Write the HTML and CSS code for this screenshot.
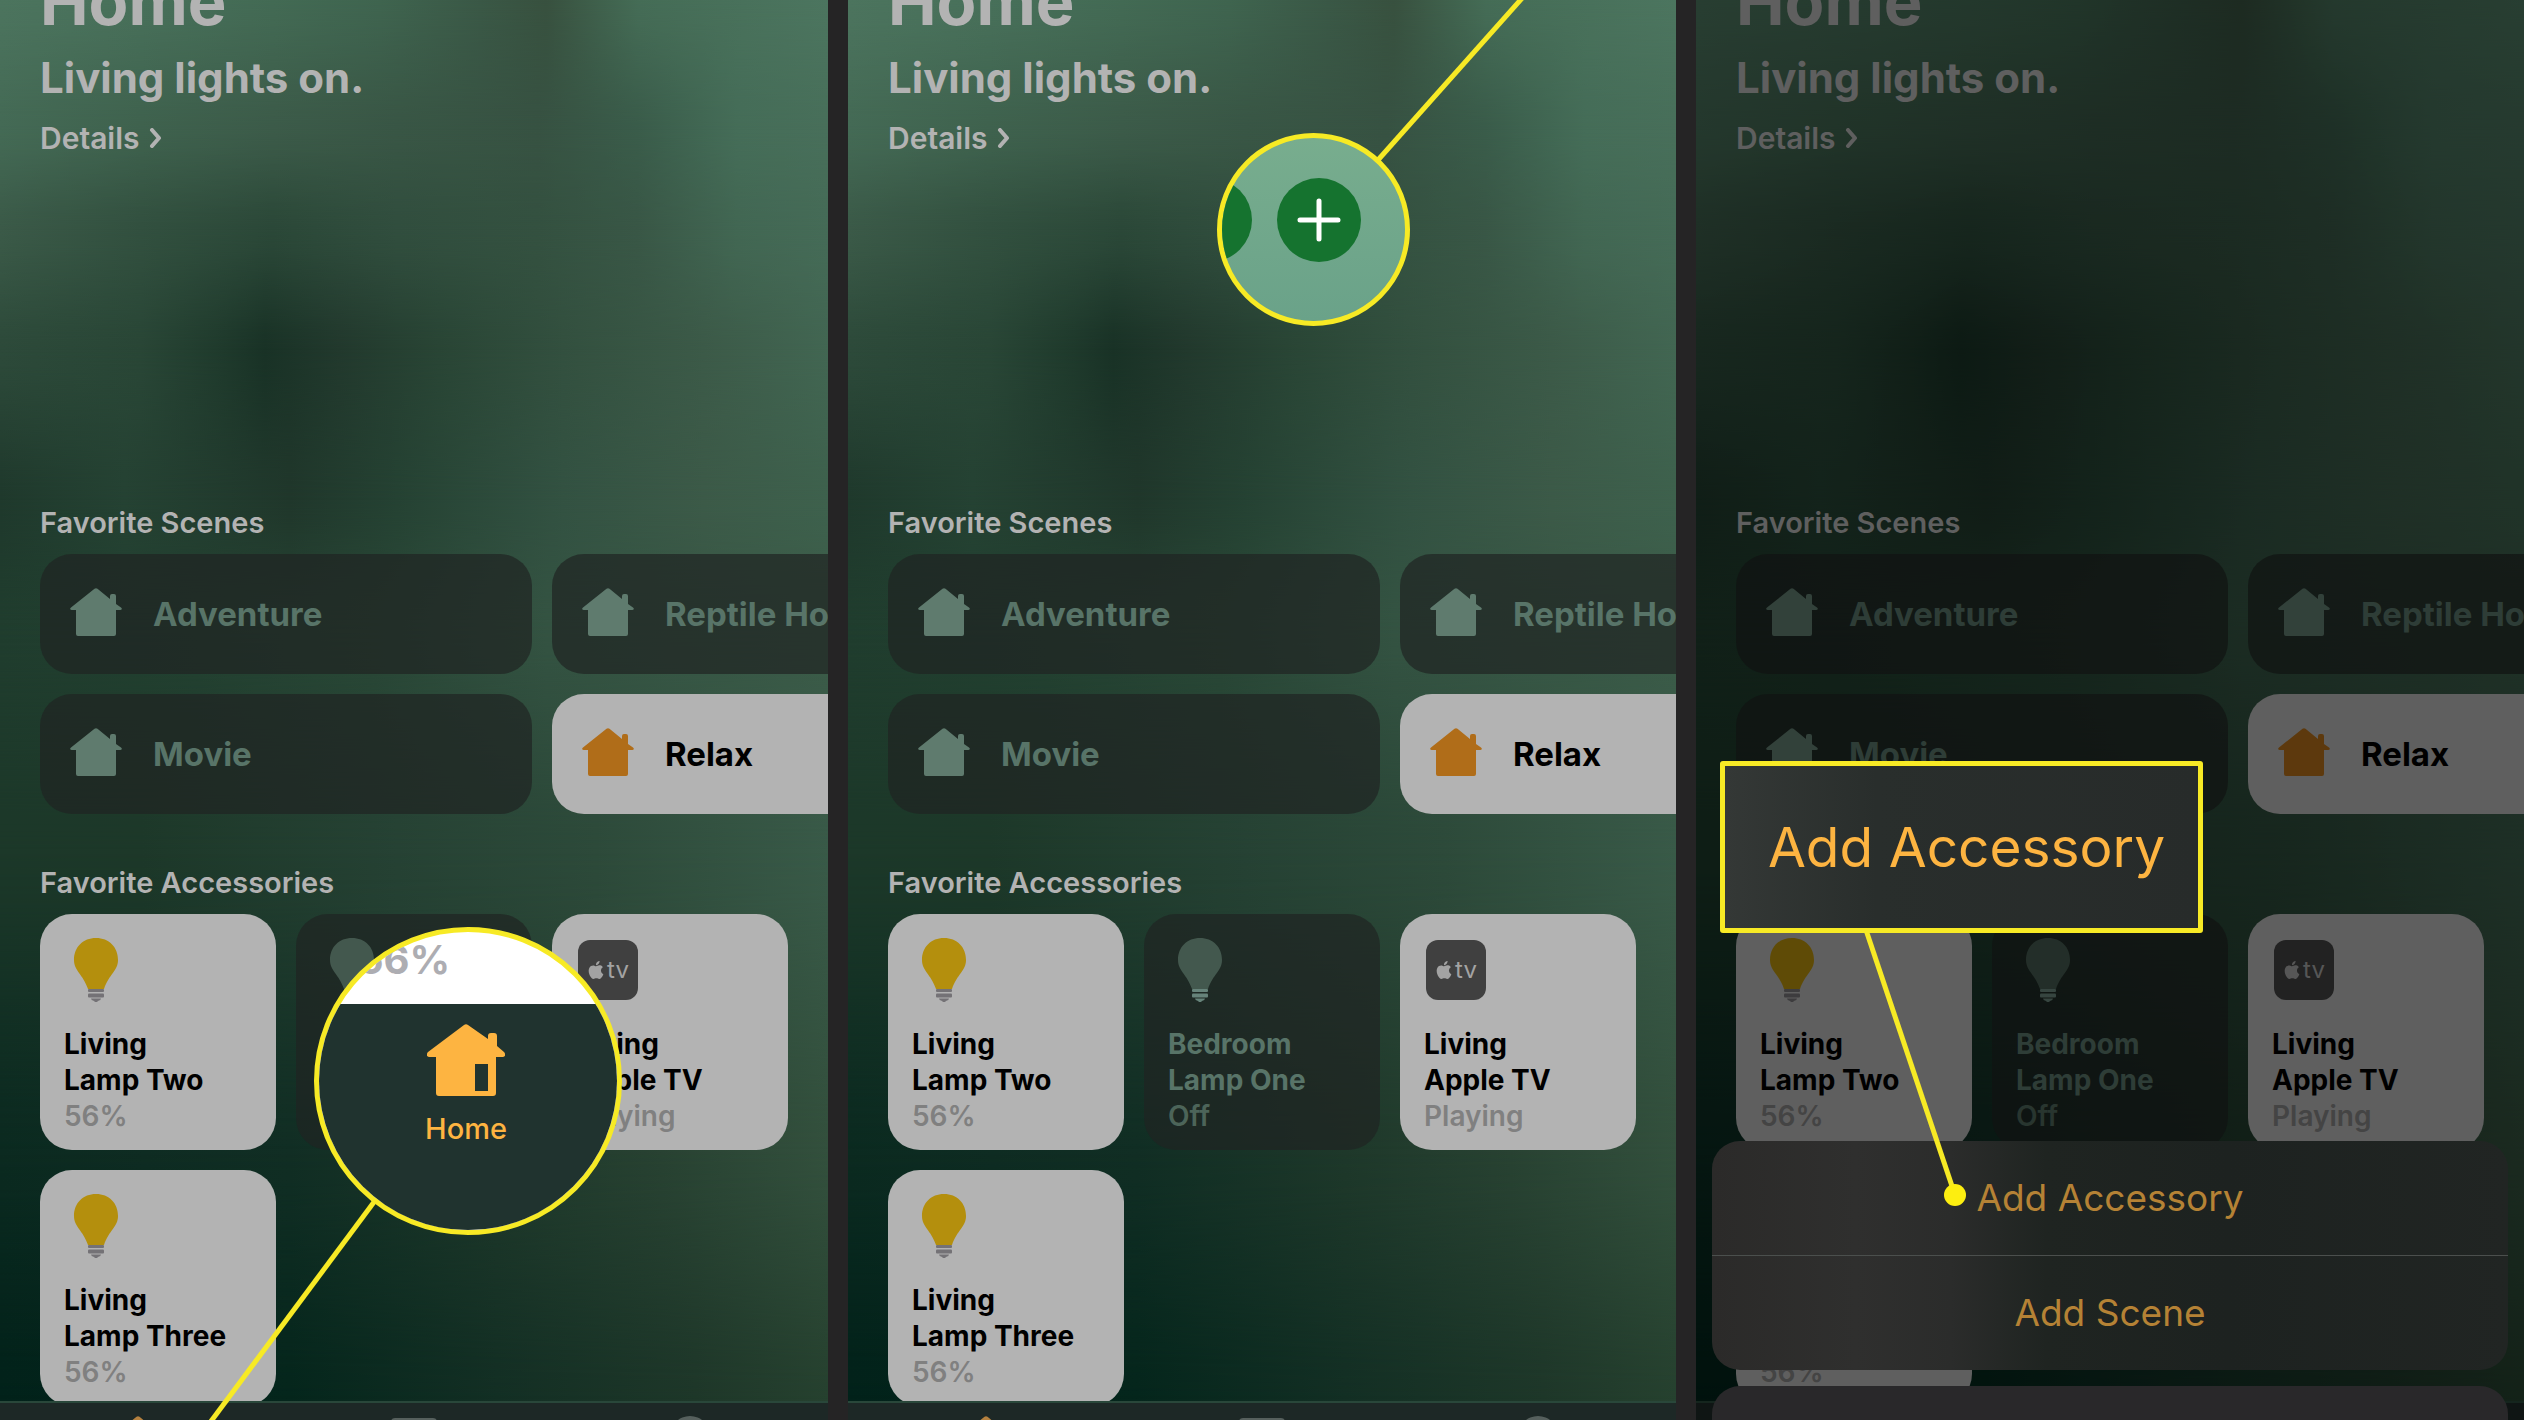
FILE: index.html
```html
<!DOCTYPE html>
<html lang="en">
<head>
<meta charset="utf-8">
<title>Home</title>
<link rel="stylesheet" href="styles.css">
<script src="app.js" defer></script>
</head>
<body>
<svg class="defs" aria-hidden="true">
  <symbol id="house" viewBox="0 0 52 52">
    <path d="M24.5.8Q26-.4 27.500.8L40 11V8q0-2 2-2h2q2 0 2 2v8l5 3.500Q53 21.500 50.500 22H46v24q0 2-2 2H8q-2 0-2-2V22H1.500Q-1 21.500 1 19.500Z"/>
  </symbol>
  <symbol id="bulb" viewBox="0 0 44 64">
    <path d="M22 0C9 0 0 9 0 22c0 11 9 14 14 29h16c5-15 14-18 14-29C44 9 35 0 22 0z"/>
    <g class="base"><rect x="14" y="51" width="16" height="3" rx="1"/><rect x="14" y="55.500" width="16" height="4" rx="1"/><path d="M17 60.500h10q0 1.500-3 2.500l-1 1h-2l-1-1q-3-1-3-2.500z"/></g>
  </symbol>
  <symbol id="apple" viewBox="0 0 24 24">
    <path d="M12.152 6.896c-.948 0-2.415-1.078-3.960-1.040-2.040.027-3.910 1.183-4.961 3.014-2.117 3.675-.546 9.103 1.519 12.090 1.013 1.454 2.208 3.090 3.792 3.039 1.520-.065 2.090-.987 3.935-.987 1.831 0 2.350.987 3.960.948 1.637-.026 2.676-1.480 3.676-2.948 1.156-1.688 1.636-3.325 1.662-3.415-.039-.013-3.182-1.221-3.220-4.857-.026-3.040 2.480-4.494 2.597-4.559-1.429-2.090-3.623-2.324-4.390-2.376-2-.156-3.675 1.090-4.610 1.090zM15.530 3.830c.843-1.012 1.400-2.427 1.245-3.830-1.207.052-2.662.805-3.532 1.818-.780.896-1.454 2.338-1.273 3.714 1.338.104 2.715-.688 3.559-1.701"/>
  </symbol>
</svg>

<template id="home-screen">
  <div class="wallpaper" aria-hidden="true">
    <i class="wash w9"></i><i class="wash w8"></i><i class="wash w7"></i><i class="wash w6"></i><i class="wash w5"></i><i class="wash w4"></i><i class="wash w3"></i><i class="wash w2"></i><i class="wash w1"></i>
  </div>
  <div class="content">
    <header class="summary">
      <h1>Home</h1>
      <p class="status">Living lights on.</p>
      <a class="details" href="#details">Details <svg class="chevron" viewBox="0 0 14 20" aria-hidden="true"><path d="M4 2l7 8-7 8"/></svg></a>
    </header>
    <section class="group">
      <h2>Favorite Scenes</h2>
      <div class="scenes">
        <button class="tile scene"><svg class="scene-icon"><use href="#house"/></svg>Adventure</button>
        <button class="tile scene"><svg class="scene-icon"><use href="#house"/></svg>Reptile House</button>
        <button class="tile scene"><svg class="scene-icon"><use href="#house"/></svg>Movie</button>
        <button class="tile scene on"><svg class="scene-icon"><use href="#house"/></svg>Relax</button>
      </div>
    </section>
    <section class="group">
      <h2>Favorite Accessories</h2>
      <div class="accessories">
        <button class="tile accessory on"><svg class="acc-icon"><use href="#bulb"/></svg><span>Living<br>Lamp Two</span><span class="state">56%</span></button>
        <button class="tile accessory"><svg class="acc-icon"><use href="#bulb"/></svg><span>Bedroom<br>Lamp One</span><span class="state">Off</span></button>
        <button class="tile accessory on"><span class="tv"><svg class="tv-apple"><use href="#apple"/></svg>tv</span><span>Living<br>Apple TV</span><span class="state">Playing</span></button>
        <button class="tile accessory on"><svg class="acc-icon"><use href="#bulb"/></svg><span>Living<br>Lamp Three</span><span class="state">56%</span></button>
      </div>
    </section>
  </div>
  <nav class="tabs" aria-label="Sections">
    <button class="tab current" aria-label="Home"><svg class="tab-icon"><use href="#house"/></svg></button>
    <button class="tab" aria-label="Rooms"><svg class="tab-icon" viewBox="0 0 52 52"><rect x="3" y="2" width="46" height="40" rx="4"/></svg></button>
    <button class="tab" aria-label="Automation"><svg class="tab-icon" viewBox="0 0 52 52"><circle cx="26" cy="20" r="20"/></svg></button>
  </nav>
</template>

<main class="board">
  <section class="phone">
    <div class="lens lens-tab">
      <p class="lens-value">56%</p>
      <div class="lens-bar">
        <svg class="lens-house" viewBox="0 0 78 73" aria-hidden="true"><path fill-rule="evenodd" d="M37 1q2-1.500 4 0l20 14v-3q0-3 3-3h3q3 0 3 3v10l7 6q3 4-1 5h-7v36q0 3-3 3H12q-3 0-3-3V33H2q-4-1-1-5zM48 40v27h13V40z"/></svg>
        <span>Home</span>
      </div>
    </div>
    <svg class="pointer" aria-hidden="true"><line x1="374" y1="1202" x2="209" y2="1424"/></svg>
  </section>
  <section class="phone">
    <div class="lens lens-add"><svg viewBox="0 0 183 183" aria-hidden="true"><circle cx="-12" cy="82" r="42"/><circle cx="97" cy="82" r="42"/><path d="M97 63v38M78 82h38"/></svg></div>
    <svg class="pointer" aria-hidden="true"><line x1="530" y1="160" x2="676" y2="-4"/></svg>
  </section>
  <section class="phone dimmed">
    <div class="scrim"></div>
    <div class="sheet">
      <div class="sheet-group">
        <button>Add Accessory</button>
        <button>Add Scene</button>
      </div>
      <div class="sheet-cancel"></div>
    </div>
    <p class="callout">Add Accessory</p>
    <svg class="pointer" aria-hidden="true"><line x1="170" y1="930" x2="259" y2="1195"/><circle cx="259" cy="1195" r="11"/></svg>
  </section>
</main>
</body>
</html>
```
FILE: app.js
```js
// Every phone shows the same home screen underneath its own overlays.
const screen = document.getElementById('home-screen');
document.querySelectorAll('.phone').forEach((phone) => {
  phone.prepend(screen.content.cloneNode(true));
});
```
FILE: styles.css
```css
:root {
  --yellow: #f7ea25;
  --grey: #b3b3b3;
}

* { box-sizing: border-box; }

body {
  margin: 0;
  background: #252425;
  font-family: Inter, "Liberation Sans", sans-serif;
  overflow: hidden;
}

h1, h2, p { margin: 0; }

button {
  border: 0;
  padding: 0;
  font: inherit;
  color: inherit;
  background: none;
  text-align: left;
}

.defs { position: absolute; width: 0; height: 0; }

.board {
  display: grid;
  grid-template-columns: repeat(3, minmax(0, 1fr));
  gap: 20px;
  height: 100vh;
}

.phone {
  position: relative;
  display: flex;
  flex-direction: column;
  min-height: 0;
  overflow: hidden;
}

/* Wallpaper: each wash is one horizontal band that eases into the next. */
.wallpaper, .wash, .scrim { position: absolute; inset: 0; }

.wash {
  --span: calc(var(--to) - var(--from));
  mask-image: linear-gradient(
    #000 var(--from),
    rgba(0, 0, 0, .88) calc(var(--from) + var(--span) * .18),
    rgba(0, 0, 0, .5) calc(var(--from) + var(--span) * .5),
    rgba(0, 0, 0, .12) calc(var(--from) + var(--span) * .82),
    transparent var(--to));
}

.w1 { --from: 0px; --to: 130px; background: linear-gradient(90deg, #4c745e, #48705a 17%, #436a54 33%, #3f644f 46%, #3a5846 58%, #38513f 66%, #456c56 77%, #4c755f); }
.w2 { --from: 130px; --to: 230px; background: linear-gradient(90deg, #446a55, #3f624e 17%, #3c5b49 33%, #395645 48%, #375242 65%, #3a5c4a 77%, #456d58 89%, #486f5a); }
.w3 { --from: 230px; --to: 350px; background: linear-gradient(90deg, #3b5a48, #32503f 17%, #2b4838 33%, #314e3e 48%, #345140 65%, #395746 77%, #426753 89%, #456b57); }
.w4 { --from: 350px; --to: 500px; background: linear-gradient(90deg, #2d4a3a, #294636 17%, #1f3a2c 27%, #193226 32%, #22392d 41%, #294535 53%, #33503f 68%, #3c5a48 85%, #426652); }
.w5 { --from: 500px; --to: 620px; background: linear-gradient(90deg, #1f392c, #254233 15%, #20372b 35%, #254233 48%, #335242 68%, #3c5a48 85%, #3e614d); }
.w6 { --from: 620px; --to: 850px; background: linear-gradient(90deg, #203d2e, #234131 24%, #294736 45%, #345342 66%, #3b5b48); }
.w7 { --from: 850px; --to: 1150px; background: linear-gradient(90deg, #1c3829, #1d3829 17%, #264234 48%, #2d4a3a 72%, #395a48); }
.w8 { --from: 1150px; --to: 1400px; background: linear-gradient(90deg, #0b2a20, #112e24 35%, #1e382a 60%, #284232 80%, #33503d); }
.w9 { mask-image: none; background: linear-gradient(90deg, #02221a, #05261c 35%, #132f24 60%, #1e3729 84%, #26412f); }

.content {
  position: relative;
  flex: 1;
  min-height: 0;
  padding: 0 40px;
  overflow: hidden;
}

.summary {
  margin-top: -34px;
  margin-bottom: 349px;
  color: var(--grey);
}

h1 { font-size: 65px; line-height: 72px; font-weight: 700; }

.status { margin: 14px 0 16px; font-size: 42px; line-height: 52px; font-weight: 700; }

.details {
  display: flex;
  align-items: center;
  gap: 8px;
  color: inherit;
  font-size: 30px;
  line-height: 36px;
  font-weight: 600;
  text-decoration: none;
}

.chevron { width: 14px; height: 20px; fill: none; stroke: currentColor; stroke-width: 4; stroke-linecap: round; stroke-linejoin: round; }

.group { margin-bottom: 51px; }

h2 {
  margin-bottom: 13px;
  color: var(--grey);
  font-size: 29px;
  line-height: 36px;
  font-weight: 600;
}

.scenes {
  display: grid;
  grid-template-rows: 120px 120px;
  grid-template-columns: repeat(2, calc((100% - 40px) / 3 * 2 + 20px));
  gap: 20px;
}

.tile {
  border-radius: 32px;
  background: rgba(31, 36, 34, .7);
  color: #587468;
  font-weight: 700;
}

.tile.on { background: var(--grey); color: #000; }

.scene {
  display: flex;
  align-items: center;
  gap: 31px;
  padding: 0 30px;
  font-size: 33px;
  line-height: 44px;
}

.scene-icon { width: 52px; height: 52px; fill: #5f7b6e; }
.scene.on .scene-icon { fill: #b06d19; }

.accessories {
  display: grid;
  grid-template-columns: repeat(3, minmax(0, 1fr));
  gap: 20px;
}

.accessory {
  display: flex;
  flex-direction: column;
  aspect-ratio: 1;
  padding: 24px 24px 0;
  font-size: 28px;
  line-height: 36px;
  white-space: nowrap;
}

.acc-icon { flex: none; width: 64px; height: 64px; margin-bottom: 24px; fill: #43584e; color: #66837a; }
.accessory.on .acc-icon { fill: #b48f0d; color: #747276; }
.base { fill: currentColor; }

.state { color: #4c6459; font-weight: 600; }
.accessory.on .state { color: #808080; }

.tv {
  display: flex;
  align-items: center;
  justify-content: center;
  gap: 2px;
  width: 60px;
  height: 60px;
  margin: 2px 2px 26px;
  border-radius: 12px;
  background: #404040;
  color: #a3a3a3;
  font-size: 24px;
  line-height: 60px;
  font-weight: 400;
}

.tv-apple { width: 18px; height: 18px; fill: currentColor; }

.tabs {
  position: relative;
  flex: 0 0 19px;
  display: grid;
  grid-template-columns: repeat(3, 1fr);
  border-top: 2px solid #29473a;
  background: #1d2826;
  overflow: hidden;
}

.tab { display: flex; justify-content: center; padding-top: 13px; }
.tab-icon { flex: none; width: 52px; height: 52px; fill: #56605d; }
.current .tab-icon { fill: #b5813f; }

/* Annotations lie over the phones. */
.pointer {
  position: absolute;
  inset: 0;
  width: 100%;
  height: 100%;
  stroke: var(--yellow);
  stroke-width: 5;
  fill: #fdee10;
  pointer-events: none;
}
.pointer circle { stroke: none; }

.lens {
  position: absolute;
  display: flex;
  flex-direction: column;
  border: 5px solid var(--yellow);
  border-radius: 50%;
  overflow: hidden;
}

.lens-tab { left: 314px; top: 927px; width: 308px; height: 308px; background: #fff; }

.lens-value {
  height: 72px;
  padding-left: 39px;
  color: #adadb2;
  font-size: 40px;
  line-height: 56px;
  font-weight: 700;
}

.lens-bar {
  flex: 1;
  display: flex;
  flex-direction: column;
  align-items: center;
  padding: 20px 4px 0 0;
  background: #20332f;
  color: #fdb441;
  font-size: 29px;
  line-height: 36px;
  font-weight: 500;
}

.lens-house { width: 78px; height: 73px; margin-bottom: 14px; fill: currentColor; }

.lens-add { left: 369px; top: 133px; width: 193px; height: 193px; background: linear-gradient(#78ad8e, #6aa289); }
.lens-add circle { fill: #15732f; }
.lens-add path { stroke: #fff; stroke-width: 5; stroke-linecap: round; }

.scrim { background: rgba(0, 0, 0, .47); }

.sheet {
  position: absolute;
  inset: auto 16px 0;
  display: flex;
  flex-direction: column;
  gap: 16px;
}

.sheet-group {
  display: flex;
  flex-direction: column;
  border-radius: 28px;
  background: linear-gradient(90deg, #2b2a29, #2f2f2e 18%, #2b2c2b 30%, #1f2421 42%, #1d2220 65%, #212523);
  overflow: hidden;
}

.sheet-group button {
  height: 114px;
  color: #b58235;
  font-size: 37px;
  line-height: 48px;
  text-align: center;
}
.sheet-group button + button { height: 115px; border-top: 1px solid #4b4f4d; }

.sheet-cancel { height: 34px; border-radius: 28px 28px 0 0; background: #29282a; }

.callout {
  position: absolute;
  left: 24px;
  top: 761px;
  width: 483px;
  height: 172px;
  padding-left: 10px;
  border: 5px solid var(--yellow);
  border-radius: 3px;
  background: linear-gradient(90deg, #343836, #292e2c 32%, #272b2a);
  color: #fdb441;
  font-size: 55px;
  line-height: 162px;
  text-align: center;
}
```
